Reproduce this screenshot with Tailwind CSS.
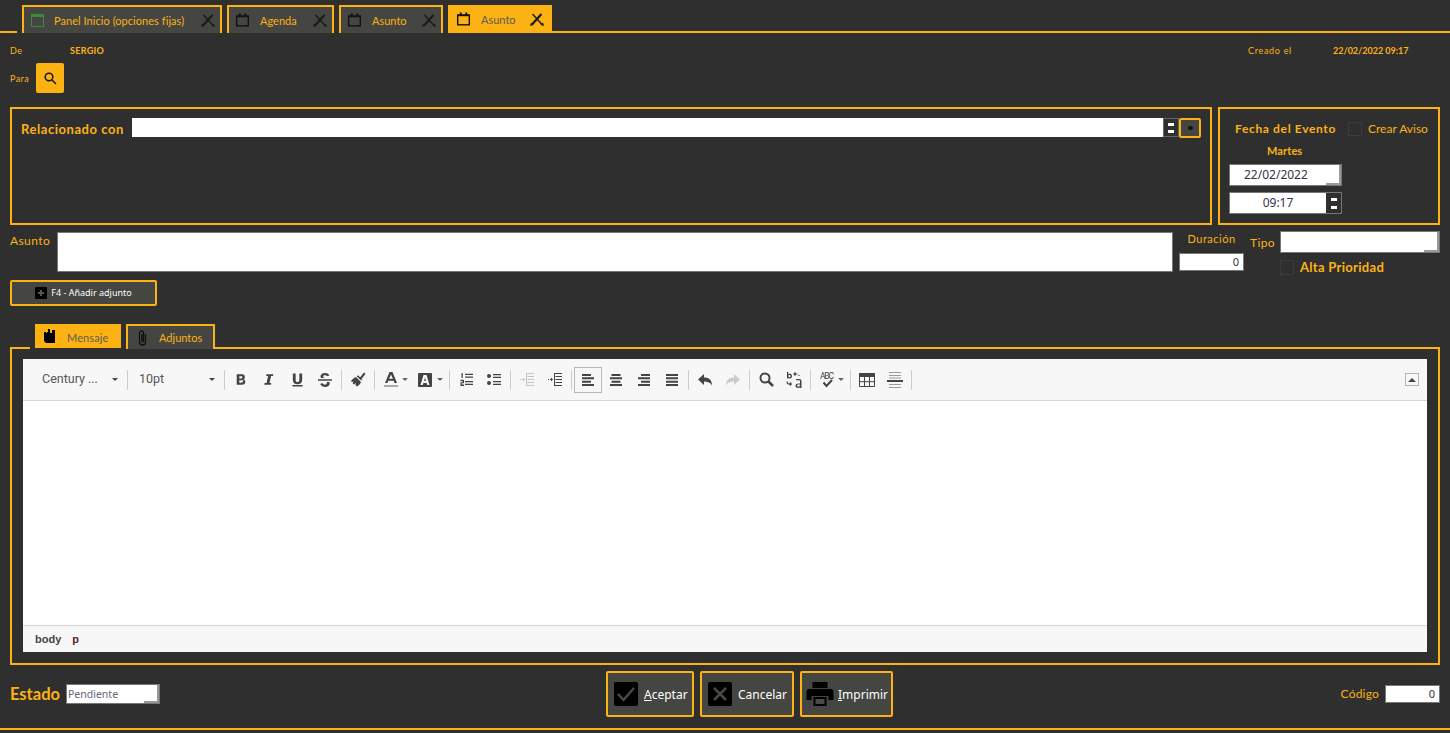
<!DOCTYPE html>
<html lang="es">
<head>
    <meta charset="UTF-8">
    <meta name="viewport" content="width=device-width, initial-scale=1.0">
    <title>Asunto</title>
    <script src="https://cdn.jsdelivr.net/npm/@tailwindcss/browser@4"></script>
</head>
<body class="bg-[#2f2f2f] h-[733px] w-[1450px] overflow-hidden font-['Lato',sans-serif] text-[#fdb214]">
    <svg class="hidden">
        <symbol id="cal" viewBox="0 0 14 14"><path d="M3 0h2v2h4V0h2v2h3v12H0V2h3z" fill="#111"/><rect x="1.500" y="4" width="11" height="8.500" fill="currentColor"/></symbol>
        <symbol id="close" viewBox="0 0 14 14"><path d="M2 12.500 11.500 2" stroke="#1c1c1c" stroke-width="2.200" fill="none"/><path d="M2.500 2 12 12.500" stroke="#1c1c1c" stroke-width="1.500" fill="none"/><path d="M0 14l1-3.500L3.500 13zM14 14l-1-3.500L10.500 13z" fill="#1c1c1c"/></symbol>
    </svg>

    <!-- pestañas principales -->
    <div class="flex h-[33px] pt-[5px]">
        <div class="w-[17px] border-b-2 border-[#fdb214]"></div>
        <div class="ml-[5px] w-[200px] h-[28px] flex items-center bg-[#454541] border-2 border-b-0 border-[#fdb214] pl-[7px] pr-[5px] text-[11px]">
            <svg class="w-[13px] h-[13px]" viewBox="0 0 13 13"><rect x=".5" y=".5" width="12" height="12" fill="#454541" stroke="#3d8a3d"/><rect x="1" y="1" width="11" height="2" fill="#3d8a3d"/></svg>
            <span class="ml-[10px] pt-[3px] flex-1 tracking-[.05px]">Panel Inicio (opciones fijas)</span>
            <svg class="w-[14px] h-[14px]"><use href="#close"/></svg>
        </div>
        <div class="ml-[5px] w-[107px] h-[28px] flex items-center bg-[#454541] border-2 border-b-0 border-[#fdb214] pl-[7px] pr-[5px] text-[11px]">
            <svg class="w-[13px] h-[14px] text-[#454541]"><use href="#cal"/></svg>
            <span class="ml-[11px] pt-[3px] flex-1">Agenda</span>
            <svg class="w-[14px] h-[14px]"><use href="#close"/></svg>
        </div>
        <div class="ml-[5px] w-[104px] h-[28px] flex items-center bg-[#454541] border-2 border-b-0 border-[#fdb214] pl-[7px] pr-[5px] text-[11px]">
            <svg class="w-[13px] h-[14px] text-[#454541]"><use href="#cal"/></svg>
            <span class="ml-[11px] pt-[3px] flex-1">Asunto</span>
            <svg class="w-[14px] h-[14px]"><use href="#close"/></svg>
        </div>
        <div class="ml-[5px] w-[104px] h-[28px] flex items-center bg-[#fdb214] pl-[9px] pr-[8px] text-[11px] text-[#5c5c52]">
            <svg class="w-[13px] h-[14px] text-[#fdb214]"><use href="#cal"/></svg>
            <span class="ml-[11px] pt-[3px] flex-1">Asunto</span>
            <svg class="w-[14px] h-[14px]"><use href="#close"/></svg>
        </div>
        <div class="flex-1 border-b-2 border-[#fdb214]"></div>
    </div>

    <!-- cabecera -->
    <div class="flex items-center h-[20px] mt-[8px] px-[10px] text-[9px]">
        <span class="w-[60px] tracking-[.4px]">De</span>
        <span class="font-bold tracking-[.3px]">SERGIO</span>
        <span class="ml-auto w-[85px] tracking-[.7px]">Creado el</span>
        <span class="font-bold w-[107px]">22/02/2022 09:17</span>
    </div>
    <div class="flex items-center h-[30px] mt-[2px] px-[10px] text-[9px]">
        <span class="w-[26px] tracking-[.4px] pt-[1px]">Para</span>
        <button class="w-[28px] h-[30px] rounded-[2px] bg-[#fdb214] flex items-center justify-center">
            <svg class="w-[13px] h-[13px]" viewBox="0 0 13 13" fill="none" stroke="#111" stroke-width="1.500"><circle cx="5" cy="5" r="3.800"/><path d="M8 8l4 4"/></svg>
        </button>
    </div>

    <!-- relacionado / fecha -->
    <div class="flex gap-[6px] h-[118px] mt-[14px] px-[10px]">
        <div class="flex-1 border-2 border-[#fdb214] pt-[9px] pl-[9px] pr-[9px]">
            <div class="flex items-start">
                <span class="w-[111px] h-[20px] pt-[1px] leading-[20px] text-[13px] font-bold tracking-[.55px]">Relacionado con</span>
                <div class="flex-1 h-[19px] bg-white"></div>
                <div class="w-[16px] h-[19px] bg-[#2f2f2f] border border-[#666] flex flex-col items-center justify-center gap-[4px]">
                    <span class="w-[6px] h-[3px] bg-white"></span>
                    <span class="w-[6px] h-[3px] bg-white"></span>
                </div>
                <button class="w-[22px] h-[20px] rounded-[2px] border-2 border-[#fdb214] bg-[#454541] flex items-center justify-center">
                    <span class="w-[5px] h-[4px] rounded-full bg-[#111]"></span>
                </button>
            </div>
        </div>
        <div class="w-[222px] border-2 border-[#fdb214] pt-[11px] pl-[9px]">
            <div class="flex items-center h-[18px]">
                <span class="ml-[6px] w-[113px] text-[12px] font-bold tracking-[.65px]">Fecha del Evento</span>
                <span class="w-[14px] h-[14px] border border-[#3c3c3c]"></span>
                <span class="ml-[6px] text-[12px]">Crear Aviso</span>
            </div>
            <div class="ml-[38px] mt-[5px] h-[16px] leading-[16px] text-[11px] font-bold tracking-[.1px]">Martes</div>
            <div class="relative mt-[5px] w-[113px] h-[22px] bg-white border border-[#777] flex items-center pl-[14px] text-[12px] text-[#334] font-['Noto_Sans',sans-serif]">
                22/02/2022
                <span class="absolute right-0 top-0 w-[2px] h-full bg-[#999]"></span>
                <span class="absolute right-0 bottom-0 w-[15px] h-[2px] bg-[#999]"></span>
            </div>
            <div class="flex mt-[6px] w-[113px] h-[22px] border border-[#777]">
                <div class="flex-1 bg-white flex items-center justify-center text-[12px] text-[#334] font-['Noto_Sans',sans-serif]">09:17</div>
                <div class="w-[15px] bg-[#2f2f2f] flex flex-col items-center justify-center gap-[5px]">
                    <span class="w-[6px] h-[3px] bg-white"></span>
                    <span class="w-[6px] h-[3px] bg-white"></span>
                </div>
            </div>
        </div>
    </div>

    <!-- asunto -->
    <div class="flex items-start h-[43px] mt-[6px] px-[10px]">
        <span class="w-[47px] mt-[1px] text-[12px] tracking-[.4px]">Asunto</span>
        <div class="w-[1116px] h-[40px] mt-[1px] bg-white border border-[#777]"></div>
        <div class="ml-[6px] w-[65px]">
            <div class="mt-[1px] h-[14px] leading-[14px] text-[11px] text-center tracking-[.5px]">Duración</div>
            <div class="mt-[7px] h-[18px] bg-white border border-[#777] flex items-center justify-end pr-[4px] text-[11px] text-[#334] font-['Noto_Sans',sans-serif]">0</div>
        </div>
        <span class="ml-[6px] w-[30px] mt-[3px] text-[12px] tracking-[.4px]">Tipo</span>
        <div class="w-[160px]">
            <div class="relative h-[22px] bg-white border border-[#777]">
                <span class="absolute right-0 top-0 w-[2px] h-full bg-[#999]"></span>
                <span class="absolute right-0 bottom-0 w-[15px] h-[2px] bg-[#999]"></span>
            </div>
            <div class="flex items-center mt-[5px]">
                <span class="w-[14px] h-[15px] border border-[#3c3c3c]"></span>
                <span class="ml-[6px] text-[13px] font-bold tracking-[.3px]">Alta Prioridad</span>
            </div>
        </div>
    </div>

    <button class="flex items-center justify-center ml-[10px] mt-[6px] w-[147px] h-[26px] rounded-[2px] border-2 border-[#fdb214] bg-[#454541] text-[9px] text-white font-['Noto_Sans',sans-serif]">
        <svg class="w-[12px] h-[12px] mr-[4px]" viewBox="0 0 12 12"><rect width="12" height="12" rx="1" fill="#000"/><path d="M6 3v6M3 6h6" stroke="#555" stroke-width="2"/></svg>
        F4 - Añadir adjunto
    </button>

    <!-- pestañas del mensaje -->
    <div class="flex h-[25px] mt-[18px] mx-[10px]">
        <div class="w-[20px] border-b-2 border-[#fdb214]"></div>
        <div class="ml-[5px] w-[86px] h-[24px] flex items-center bg-[#fdb214] pl-[9px] text-[11px] text-[#5c5c52]">
            <svg class="w-[12px] h-[15px]" viewBox="0 0 12 15" fill="#000"><path d="M0 3h2v1h1V3h1V0h2v4h2V1h3v13H2l-2-2z"/></svg>
            <span class="ml-[11px] pt-[4px] tracking-[.1px]">Mensaje</span>
        </div>
        <div class="ml-[5px] w-[89px] h-[25px] flex items-center bg-[#454541] border-2 border-b-0 border-[#fdb214] pl-[9px] text-[11px]">
            <svg class="w-[11px] h-[16px]" viewBox="0 0 11 16" fill="none" stroke="#111" stroke-width="1.300"><path d="M8.500 4v8a3 3 0 0 1-6 0V3a2 2 0 0 1 4 0v8a.8.8 0 0 1-1.600 0V4"/></svg>
            <span class="ml-[11px] pt-[2px]">Adjuntos</span>
        </div>
        <div class="flex-1 border-b-2 border-[#fdb214]"></div>
    </div>

    <!-- editor -->
    <div class="h-[316px] mx-[10px] border-x-2 border-b-2 border-[#fdb214] pt-[10px] px-[11px] pb-[11px]">
        <div class="flex flex-col h-[293px] bg-white">
            <div class="flex items-center h-[42px] pl-[7px] pr-[8px] bg-[#f7f7f7] border-b border-[#d5d5d5] text-[#555] font-['Roboto',sans-serif]">
                <div class="flex items-center w-[95px] h-[26px] pl-[12px] text-[12.500px]">Century ...<span class="ml-auto mr-[7px] border-x-[3px] border-t-[3px] border-x-transparent border-t-[#444]"></span></div>
                <span class="w-px h-[20px] mx-[2px] bg-[#ccc]"></span>
                <div class="flex items-center w-[92px] h-[26px] pl-[9px] text-[12.500px]">10pt<span class="ml-auto mr-[7px] border-x-[3px] border-t-[3px] border-x-transparent border-t-[#444]"></span></div>
                <span class="w-px h-[20px] mx-[2px] bg-[#ccc]"></span>
                <button class="w-[28px] h-[26px] flex items-center justify-center"><svg class="w-[12px] h-[13px]" viewBox="0 0 14 14" fill="#444"><path fill-rule="evenodd" d="M2 1h6c2.500 0 3.500 1.400 3.500 3 0 1.300-.7 2.200-1.600 2.600 1.300.4 2.100 1.400 2.100 2.900 0 2-1.400 3.500-4 3.500H2zm3 2.300v2.500h2.300c.9 0 1.300-.5 1.300-1.300S8.200 3.300 7.300 3.300zm0 4.700v2.700h2.600c1 0 1.500-.5 1.500-1.400S10.900 8 9.900 8z"/></svg></button>
                <button class="w-[28px] h-[26px] flex items-center justify-center"><svg class="w-[12px] h-[13px]" viewBox="0 0 14 14" fill="#444"><path d="M4 1h8l-.3 2H9.400L7.600 11h2l-.3 2H1.500l.3-2h2.300L6 3H3.700z"/></svg></button>
                <button class="w-[28px] h-[26px] flex items-center justify-center"><svg class="w-[13px] h-[14px]" viewBox="0 0 14 14" fill="#444"><path d="M2 0h3v7c0 1.500.7 2.200 2 2.200S9 8.500 9 7V0h3v7c0 3-2 4.500-5 4.500S2 10 2 7zM1.500 12.500h11V14h-11z"/></svg></button>
                <button class="w-[28px] h-[26px] flex items-center justify-center"><svg class="w-[14px] h-[14px]" viewBox="0 0 14 14" fill="#444"><path d="M0 6.200h14v1.600H0zM3 5c-.3-.5-.5-1-.5-1.600C2.500 1.300 4.500 0 7 0c2 0 3.700.8 4.400 2.500l-2.400.8C8.600 2.500 8 2.200 7 2.200c-1.200 0-1.800.5-1.800 1.200 0 .7.600 1.200 1.800 1.600zM8.500 9c.3.300.4.600.4 1 0 .9-.8 1.600-2 1.600-1.200 0-2-.5-2.500-1.500l-2.300.9C3.300 13.100 5 14 7 14c3 0 4.700-1.500 4.700-3.800 0-.4 0-.8-.2-1.200z"/></svg></button>
                <span class="w-px h-[20px] mx-[2px] bg-[#ccc]"></span>
                <button class="w-[28px] h-[26px] flex items-center justify-center"><svg class="w-[15px] h-[15px]" viewBox="0 0 15 15" fill="#444"><path d="M9 5.500 13 .5l1.500 1.200-3.700 5zM5.700 4.200l1.300-.9 4 4-.9 1.300zM5 5l5 5c-.5 1.500-2 3.500-4 4.500L4.500 13 5 11l-2 1.500L1.500 11 3 9.500 1 10 0 9c1.500-2 3.500-3.500 5-4z"/></svg></button>
                <span class="w-px h-[20px] mx-[2px] bg-[#ccc]"></span>
                <button class="w-[35px] h-[26px] flex items-center pl-[7px]"><svg class="w-[14px] h-[15px]" viewBox="0 0 14 15"><path fill="#444" fill-rule="evenodd" d="M5.500 0h3L13 11h-2.500l-.8-2.200H4.300L3.500 11H1zM5.100 6.800h3.800L7 2.500z"/><rect y="13" width="14" height="2" fill="#aaa"/></svg><span class="ml-[4px] border-x-[3px] border-t-[3px] border-x-transparent border-t-[#666]"></span></button>
                <button class="w-[35px] h-[26px] flex items-center pl-[6px]"><svg class="w-[14px] h-[14px]" viewBox="0 0 14 14"><path fill="#444" fill-rule="evenodd" d="M1 0h12a1 1 0 0 1 1 1v12a1 1 0 0 1-1 1H1a1 1 0 0 1-1-1V1a1 1 0 0 1 1-1zm4.500 2L2.500 12h2.200l.7-2h3.200l.7 2h2.200L8.500 2zm.6 6L7 4.500 7.900 8z"/></svg><span class="ml-[5px] border-x-[3px] border-t-[3px] border-x-transparent border-t-[#666]"></span></button>
                <span class="w-px h-[20px] mx-[2px] bg-[#ccc]"></span>
                <button class="w-[28px] h-[26px] flex items-center justify-center"><svg class="w-[13px] h-[13px]" viewBox="0 0 13 13" fill="#444"><path d="M5 .8h8v1.200H5zM5 3.500h8v1.200H5zM5 8h8v1.200H5zM5 10.800h8V12H5zM1.500 0h1.300v5H1.500zM.5 6.800h3.500v3.400H1.800V11.500H4V13H.5V9.200h2.200V8.200H.5z"/></svg></button>
                <button class="w-[28px] h-[26px] flex items-center justify-center"><svg class="w-[14px] h-[13px]" viewBox="0 0 14 13" fill="#444"><circle cx="2" cy="3" r="2"/><circle cx="2" cy="10" r="2"/><path d="M6 1h8v1.200H6zM6 3.800h8V5H6zM6 8h8v1.200H6zM6 10.800h8V12H6z"/></svg></button>
                <span class="w-px h-[20px] mx-[2px] bg-[#ccc]"></span>
                <button class="w-[28px] h-[26px] flex items-center justify-center"><svg class="w-[14px] h-[13px]" viewBox="0 0 14 13" fill="#c4c4c4"><path d="M6 0h8v1H6zM7.500 3h6.500v1H7.500zM7.500 6h6.500v1H7.500zM7.500 9h6.500v1H7.500zM6 12h8v1H6zM0 6h1v1H0zM2 6h1v1H2zM3 4.500 5 6.500 3 8.500zM6 0h1v13H6z"/></svg></button>
                <button class="w-[28px] h-[26px] flex items-center justify-center"><svg class="w-[14px] h-[13px]" viewBox="0 0 14 13" fill="#444"><path d="M6 0h8v1H6zM7.500 3h6.500v1H7.500zM7.500 6h6.500v1H7.500zM7.500 9h6.500v1H7.500zM6 12h8v1H6zM0 6h1v1H0zM2 6h1v1H2zM3 4.500 5 6.500 3 8.500zM6 0h1v13H6z"/></svg></button>
                <span class="w-px h-[20px] mx-[2px] bg-[#ccc]"></span>
                <button class="w-[28px] h-[26px] border border-[#b8b8b8] flex items-center justify-center"><svg class="w-[12px] h-[12px]" viewBox="0 0 12 12" fill="#444"><path d="M0 0h9v2H0zM0 3.300h12v2H0zM0 6.700h9v2H0zM0 10h12v2H0z"/></svg></button>
                <button class="w-[28px] h-[26px] flex items-center justify-center"><svg class="w-[12px] h-[12px]" viewBox="0 0 12 12" fill="#444"><path d="M1.500 0h9v2h-9zM0 3.300h12v2H0zM1.500 6.700h9v2h-9zM0 10h12v2H0z"/></svg></button>
                <button class="w-[28px] h-[26px] flex items-center justify-center"><svg class="w-[12px] h-[12px]" viewBox="0 0 12 12" fill="#444"><path d="M3 0h9v2H3zM0 3.300h12v2H0zM3 6.700h9v2H3zM0 10h12v2H0z"/></svg></button>
                <button class="w-[28px] h-[26px] flex items-center justify-center"><svg class="w-[12px] h-[12px]" viewBox="0 0 12 12" fill="#444"><path d="M0 0h12v2H0zM0 3.300h12v2H0zM0 6.700h12v2H0zM0 10h12v2H0z"/></svg></button>
                <span class="w-px h-[20px] mx-[2px] bg-[#ccc]"></span>
                <button class="w-[28px] h-[26px] flex items-center justify-center"><svg class="w-[14px] h-[12px]" viewBox="0 0 14 12" fill="#444"><path d="M6 0v3.500c5 0 8 2.500 8 8-1.500-3-4-4-8-4V11L0 5.500z"/></svg></button>
                <button class="w-[28px] h-[26px] flex items-center justify-center"><svg class="w-[14px] h-[12px]" viewBox="0 0 14 12" fill="#ccc"><path d="M8 0v3.500c-5 0-8 2.500-8 8 1.500-3 4-4 8-4V11l6-5.500z"/></svg></button>
                <span class="w-px h-[20px] mx-[2px] bg-[#ccc]"></span>
                <button class="w-[28px] h-[26px] flex items-center justify-center"><svg class="w-[15px] h-[15px]" viewBox="0 0 15 15" fill="none" stroke="#444" stroke-width="2"><circle cx="6" cy="6" r="4.500"/><path d="M9.500 9.500 14 14" stroke-width="2.500"/></svg></button>
                <button class="w-[28px] h-[26px] flex items-center justify-center"><svg class="w-[16px] h-[16px]" viewBox="0 0 16 16"><path fill="#444" fill-rule="evenodd" d="M1 0h1.300v2.300C3 1.900 3.400 1.800 4 1.800c1.300 0 2 1 2 2.300S5.300 6.500 4 6.500c-.6 0-1-.2-1.700-.5v.4H1zm2.500 3C2.800 3 2.300 3.400 2.300 4.100s.5 1.200 1.200 1.200 1.200-.5 1.200-1.200S4.200 3 3.500 3zM10 7h3c1.500 0 2.500.8 2.500 2.200V16H14v-.7c-.5.500-1.200.7-2 .7-1.500 0-2.500-.9-2.500-2.200 0-1.500 1.200-2.300 3-2.300H14V9.500c0-.7-.4-1.200-1.200-1.200H10zm2.300 5.500c-.8 0-1.300.4-1.300 1.100s.5 1.100 1.200 1.100c.8 0 1.800-.6 1.800-1.400v-.8z"/><path d="M8 2h3.500M9.500.500 8 2l1.500 1.500M1 9.500h0c0 1.500.5 2.500 2 2.500h2M3.800 10.500 5.300 12l-1.500 1.500M13 4V3" stroke="#444" stroke-width="1.200" fill="none"/></svg></button>
                <span class="w-px h-[20px] mx-[2px] bg-[#ccc]"></span>
                <button class="w-[35px] h-[26px] flex items-center pl-[7px]"><svg class="w-[15px] h-[16px]" viewBox="0 0 15 16"><text x="0" y="7" font-size="8.500" font-family="Roboto,sans-serif" textLength="14" fill="#444">ABC</text><path d="M3.500 10.500l3 3.500L12 8" stroke="#444" stroke-width="2" fill="none"/></svg><span class="ml-[3px] border-x-[3px] border-t-[3px] border-x-transparent border-t-[#666]"></span></button>
                <span class="w-px h-[20px] mx-[2px] bg-[#ccc]"></span>
                <button class="w-[28px] h-[26px] flex items-center justify-center"><svg class="w-[16px] h-[14px]" viewBox="0 0 16 14"><path fill="#444" d="M0 0h16v4H0z"/><path d="M.5 4v9.500h15V4M5.500 4v9.500M10.500 4v9.500M.5 8.700h15" stroke="#444" fill="none"/></svg></button>
                <button class="w-[28px] h-[26px] flex items-center justify-center"><svg class="w-[16px] h-[16px]" viewBox="0 0 16 16"><path d="M2 .5h12M2 3.500h12M2 12.500h12M2 15.500h12M2 6h12" stroke="#999"/><path fill="#444" d="M0 8h16v2H0z"/></svg></button>
                <span class="w-px h-[20px] mx-[2px] bg-[#ccc]"></span>
                <button class="ml-auto w-[14px] h-[13px] border border-[#b5b5b5] flex items-center justify-center"><span class="border-x-[4px] border-b-[4px] border-x-transparent border-b-[#444]"></span></button>
            </div>
            <div class="flex-1"></div>
            <div class="flex items-center gap-[11px] h-[27px] pl-[12px] bg-[#f7f7f7] border-t border-[#d5d5d5] text-[11px] font-bold font-['Liberation_Sans',sans-serif]">
                <span class="text-[#444]">body</span>
                <span class="text-[#5a2020]">p</span>
            </div>
        </div>
    </div>

    <!-- pie -->
    <div class="flex h-[65px] pt-[6px] px-[10px] border-b-2 border-[#fdb214]">
        <div class="flex items-center w-[596px] h-[46px]">
            <span class="w-[56px] text-[16.500px] font-bold">Estado</span>
            <div class="relative flex items-center w-[94px] h-[20px] bg-white border border-[#777] pl-[1px] pt-[2px] text-[10.500px] text-[#667] font-['Noto_Sans',sans-serif]">
                Pendiente
                <span class="absolute right-0 top-0 w-[2px] h-full bg-[#999]"></span>
                <span class="absolute right-0 bottom-0 w-[15px] h-[2px] bg-[#999]"></span>
            </div>
        </div>
        <div class="flex gap-[6px] h-[46px] text-[12px] text-white font-['Noto_Sans',sans-serif]">
            <button class="flex items-center w-[88px] rounded-[2px] border-2 border-[#fdb214] bg-[#454541] pl-[6px]">
                <svg class="w-[24px] h-[24px]" viewBox="0 0 24 24"><rect width="24" height="24" rx="2" fill="#000"/><path d="M4 12l5.500 6L20 6" stroke="#4a4a46" stroke-width="2.500" fill="none"/></svg>
                <span class="ml-[6px] pt-[1px]"><u>A</u>ceptar</span>
            </button>
            <button class="flex items-center w-[94px] rounded-[2px] border-2 border-[#fdb214] bg-[#454541] pl-[6px]">
                <svg class="w-[24px] h-[24px]" viewBox="0 0 24 24"><rect width="24" height="24" rx="2" fill="#000"/><path d="M6 6l12 12M18 6 6 18" stroke="#4a4a46" stroke-width="2.500" fill="none"/></svg>
                <span class="ml-[6px] pt-[1px]">Cancelar</span>
            </button>
            <button class="flex items-center w-[93px] rounded-[2px] border-2 border-[#fdb214] bg-[#454541] pl-[4px]">
                <svg class="w-[28px] h-[24px]" viewBox="0 0 27 24"><path fill="#000" fill-rule="evenodd" d="M6 0h15v6H6zM3 7h21a3 3 0 0 1 3 3v8h-5v-4H5v4H0v-8a3 3 0 0 1 3-3z"/><rect x="7" y="15" width="13" height="9" fill="#000"/><rect x="9" y="17" width="9" height="5" fill="#4a4a46"/></svg>
                <span class="ml-[4px] pt-[1px]"><u>I</u>mprimir</span>
            </button>
        </div>
        <div class="flex-1 flex items-center justify-end h-[46px]">
            <span class="mr-[6px] text-[12px] tracking-[.2px]">Código</span>
            <div class="w-[55px] h-[18px] bg-white border border-[#777] flex items-center justify-end pr-[4px] text-[11px] text-[#334] font-['Noto_Sans',sans-serif]">0</div>
        </div>
    </div>
</body>
</html>
